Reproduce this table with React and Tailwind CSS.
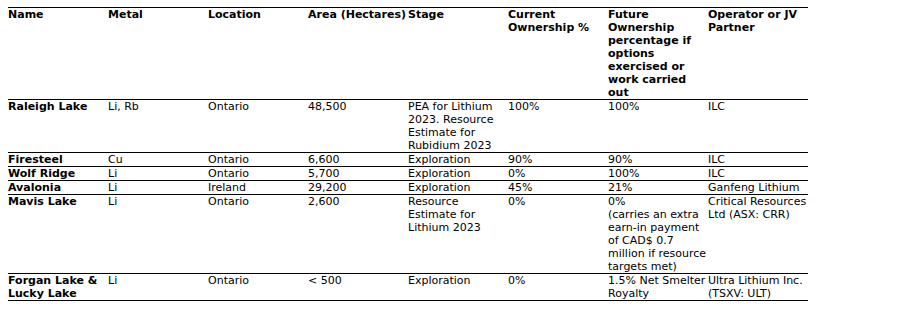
import React from "react";

const header = [
  ["Name"],
  ["Metal"],
  ["Location"],
  ["Area (Hectares)"],
  ["Stage"],
  ["Current", "Ownership %"],
  ["Future", "Ownership", "percentage if", "options", "exercised or", "work carried", "out"],
  ["Operator or JV", "Partner"],
];

const rows = [
  [["Raleigh Lake"], ["Li, Rb"], ["Ontario"], ["48,500"], ["PEA for Lithium", "2023. Resource", "Estimate for", "Rubidium 2023"], ["100%"], ["100%"], ["ILC"]],
  [["Firesteel"], ["Cu"], ["Ontario"], ["6,600"], ["Exploration"], ["90%"], ["90%"], ["ILC"]],
  [["Wolf Ridge"], ["Li"], ["Ontario"], ["5,700"], ["Exploration"], ["0%"], ["100%"], ["ILC"]],
  [["Avalonia"], ["Li"], ["Ireland"], ["29,200"], ["Exploration"], ["45%"], ["21%"], ["Ganfeng Lithium"]],
  [["Mavis Lake"], ["Li"], ["Ontario"], ["2,600"], ["Resource", "Estimate for", "Lithium 2023"], ["0%"], ["0%", "(carries an extra", "earn-in payment", "of CAD$ 0.7", "million if resource", "targets met)"], ["Critical Resources", "Ltd (ASX: CRR)"]],
  [["Forgan Lake &", "Lucky Lake"], ["Li"], ["Ontario"], ["< 500"], ["Exploration"], ["0%"], ["1.5% Net Smelter", "Royalty"], ["Ultra Lithium Inc.", "(TSXV: ULT)"]],
];

function Cell({ lines, bold }) {
  return (
    <td className={`w-[100px] max-w-[100px] p-0 align-top whitespace-nowrap overflow-visible ${bold ? "font-bold" : ""}`}>
      {lines.map((l, i) => (
        <div key={i} className="h-[13px] leading-[13px]">{l}</div>
      ))}
    </td>
  );
}

export default function App() {
  return (
    <div className="w-[914px] h-[316px] bg-white pt-[7px] pl-[8px] text-black text-[11px] leading-[13px] font-['DejaVu_Sans',Verdana,sans-serif]">
      <table className="border-collapse table-fixed w-[800px]">
        <tbody>
          <tr className="border-t border-black">
            {header.map((h, i) => (
              <Cell key={i} lines={h} bold />
            ))}
          </tr>
          {rows.map((r, ri) => (
            <tr key={ri} className={`border-t border-black ${ri === rows.length - 1 ? "border-b" : ""}`}>
              {r.map((c, ci) => (
                <Cell key={ci} lines={c} bold={ci === 0} />
              ))}
            </tr>
          ))}
        </tbody>
      </table>
    </div>
  );
}
